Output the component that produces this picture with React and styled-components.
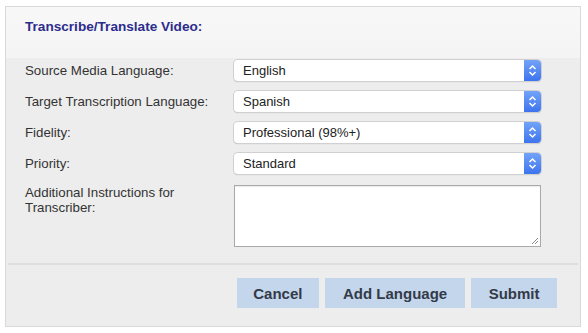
import React from "react";
import styled, { createGlobalStyle } from "styled-components";

const Global = createGlobalStyle`
	body {
		margin: 0;
		background: #ffffff;
		font-family: "Liberation Sans", Arial, Helvetica, sans-serif;
	}
`;

const Panel = styled.div`
	box-sizing: border-box;
	margin: 6px 0 0 5px;
	width: 576px;
	height: 321px;
	border: 1px solid #d9d9d9;
	background: #ededed;
	display: flex;
	flex-direction: column;
`;

const Header = styled.div`
	height: 51px;
	background: linear-gradient(#f8f8f8, #f4f4f4);
	padding: 12px 0 0 19px;
	box-sizing: border-box;
`;

const Title = styled.div`
	font-size: 13.6px;
	font-weight: bold;
	color: #2c2c8c;
`;

const Form = styled.div`
	display: flex;
	flex-direction: column;
	gap: 10px;
	padding: 2px 38px 0 19px;
`;

const Row = styled.div`
	display: flex;
	align-items: ${(p) => (p.top ? "flex-start" : "center")};
`;

const Label = styled.div`
	width: 209px;
	padding-right: 12px;
	box-sizing: border-box;
	font-size: 13.3px;
	line-height: 15px;
	color: #333;
	padding-top: ${(p) => (p.top ? "1px" : "0")};
`;

const SelectBox = styled.div`
	position: relative;
	box-sizing: border-box;
	width: 307px;
	height: 21px;
	background: #fff;
	border-radius: 4px;
	box-shadow: 0 0 0 1px #d0d0d0, 0 1px 1px rgba(0, 0, 0, 0.25);
	display: flex;
	align-items: center;
	padding-left: 9px;
	font-size: 13px;
	color: #222;
`;

const Arrow = styled.div`
	position: absolute;
	right: 0;
	top: 0;
	bottom: 0;
	width: 17px;
	border-radius: 0 4px 4px 0;
	background: linear-gradient(#73a3f8, #3d74ee);
	display: flex;
	align-items: center;
	justify-content: center;
`;

const TextArea = styled.div`
	position: relative;
	box-sizing: border-box;
	width: 307px;
	height: 62px;
	margin-top: 1px;
	background: #fff;
	border: 1px solid #a9a9a9;
	box-shadow: inset 0 1px 1px rgba(0, 0, 0, 0.08);
`;

const Grip = styled.svg`
	position: absolute;
	right: 1px;
	bottom: 1px;
`;

const Divider = styled.div`
	margin: 16px 2px 0 2px;
	height: 2px;
	background: #dedede;
`;

const Footer = styled.div`
	display: flex;
	justify-content: flex-end;
	gap: 6px;
	padding: 13px 23px 0 0;
`;

const Button = styled.div`
	height: 30px;
	padding: 0 ${(p) => p.pad}px;
	background: #c4d6ec;
	color: #333a48;
	font-size: 15px;
	font-weight: bold;
	display: flex;
	align-items: center;
`;

const Select = ({ value }) => (
	<SelectBox>
		{value}
		<Arrow>
			<svg width="9" height="13" viewBox="0 0 9 13">
				<path d="M1.5 5 L4.5 2 L7.5 5 M1.5 8 L4.5 11 L7.5 8" fill="none" stroke="#fff" strokeWidth="1.5" />
			</svg>
		</Arrow>
	</SelectBox>
);

const App = () => {
	const rows = [
		["Source Media Language:", "English"],
		["Target Transcription Language:", "Spanish"],
		["Fidelity:", "Professional (98%+)"],
		["Priority:", "Standard"],
	];

	return (
		<>
			<Global />
			<Panel>
				<Header>
					<Title>Transcribe/Translate Video:</Title>
				</Header>
				<Form>
					{rows.map(([label, value]) => (
						<Row key={label}>
							<Label>{label}</Label>
							<Select value={value} />
						</Row>
					))}
					<Row top>
						<Label top>Additional Instructions for Transcriber:</Label>
						<TextArea>
							<Grip width="8" height="8" viewBox="0 0 8 8">
								<path d="M7 1 L1 7 M7 4 L4 7" stroke="#888" strokeWidth="1" />
							</Grip>
						</TextArea>
					</Row>
				</Form>
				<Divider />
				<Footer>
					<Button pad={16.5}>Cancel</Button>
					<Button pad={18}>Add Language</Button>
					<Button pad={17.5}>Submit</Button>
				</Footer>
			</Panel>
		</>
	);
};

export default App;
